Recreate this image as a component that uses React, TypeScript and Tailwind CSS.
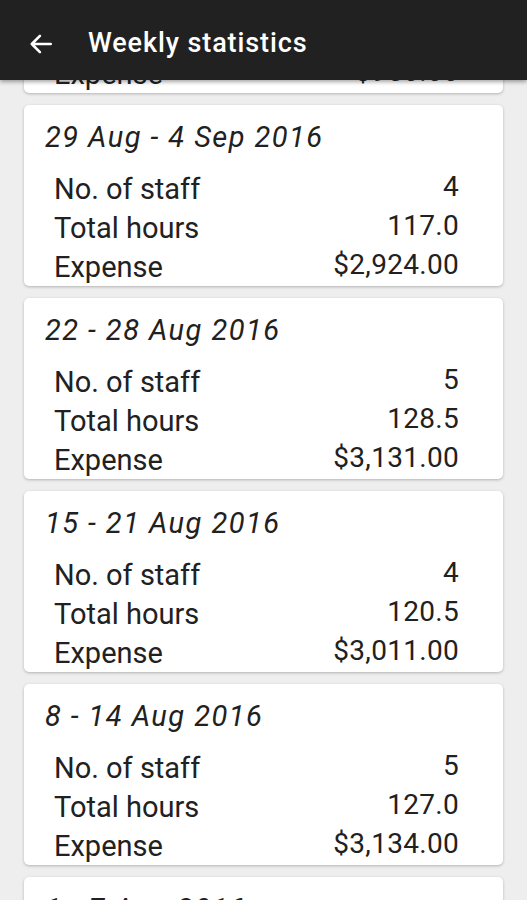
import React from "react";

interface IWeek {
  range: string;
  staff: string;
  hours: string;
  expense: string;
}

const weeks: IWeek[] = [
  { range: "5 - 11 Sep 2016", staff: "2", hours: "38.0", expense: "$950.00" },
  { range: "29 Aug - 4 Sep 2016", staff: "4", hours: "117.0", expense: "$2,924.00" },
  { range: "22 - 28 Aug 2016", staff: "5", hours: "128.5", expense: "$3,131.00" },
  { range: "15 - 21 Aug 2016", staff: "4", hours: "120.5", expense: "$3,011.00" },
  { range: "8 - 14 Aug 2016", staff: "5", hours: "127.0", expense: "$3,134.00" },
  { range: "1 - 7 Aug 2016", staff: "5", hours: "130.0", expense: "$3,250.00" },
];

const Row = ({ label, value }: { label: string; value: string }) => (
  <div className="flex justify-between items-center h-[39px]">
    <span className="text-[29px]">{label}</span>
    <span className="text-[28px] tracking-[0.3px] -translate-y-[3px]">{value}</span>
  </div>
);

const WeekCard = ({ week }: { week: IWeek }) => (
  <div className="bg-white rounded-[5px] shadow-[0_1px_3px_rgba(0,0,0,0.25)] h-[181px] pl-[21px] pr-[44px] pt-[13px] text-[#212121]">
    <h4 className="text-[29px] italic tracking-[1.45px] leading-[38px]">{week.range}</h4>
    <div className="pl-[9px] pt-[14px]">
      <Row label="No. of staff" value={week.staff} />
      <Row label="Total hours" value={week.hours} />
      <Row label="Expense" value={week.expense} />
    </div>
  </div>
);

const App = () => {
  return (
    <main
      className="h-[900px] w-[527px] overflow-hidden bg-[#eeeeee]"
      style={{ fontFamily: "Roboto, 'Noto Sans', sans-serif" }}
    >
      <header className="relative z-10 h-[80px] pt-[7px] bg-[#212121] flex items-center shadow-[0_2px_4px_rgba(0,0,0,0.35)]">
        <svg
          className="ml-[28px]"
          width="26"
          height="26"
          viewBox="0 0 24 24"
          fill="none"
          stroke="white"
          strokeWidth="2.4"
          strokeLinecap="round"
          strokeLinejoin="round"
        >
          <path d="M21 12H3.5M11 4.5 3.5 12l7.5 7.5" />
        </svg>
        <h1 className="ml-[34px] text-white text-[27px] font-medium tracking-[0.9px]">
          Weekly statistics
        </h1>
      </header>
      <div className="-mt-[168px] px-[24px] flex flex-col gap-[12px]">
        {weeks.map((week) => (
          <WeekCard key={week.range} week={week} />
        ))}
      </div>
    </main>
  );
};

export default App;
